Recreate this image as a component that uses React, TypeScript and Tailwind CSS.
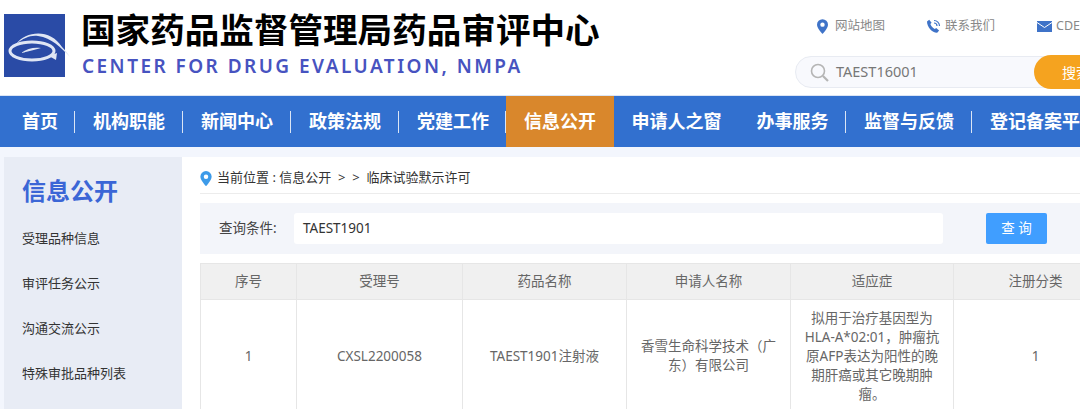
// App.tsx - 药审中心 信息公开页
import React from 'react'

const NAV = [
  { label: '首页', sep: true, cls: 'pl-[18px] pr-[17px]', sepCls: 'left-[17px]' },
  { label: '机构职能', sep: true, cls: 'px-[18px]', sepCls: 'left-[18px]' },
  { label: '新闻中心', sep: true, cls: 'px-[18px]', sepCls: 'left-[18px]' },
  { label: '政策法规', sep: true, cls: 'px-[18px]', sepCls: 'left-[18px]' },
  { label: '党建工作', sep: true, cls: 'pl-[18px] pr-[17px]', sepCls: 'left-[17px]' },
  { label: '信息公开', cls: 'px-[18px] bg-[#d9872c]' },
  { label: '申请人之窗', cls: 'px-[17.500px]' },
  { label: '办事服务', sep: true, cls: 'px-[17.500px]', sepCls: 'left-[17.500px]' },
  { label: '监督与反馈', sep: true, cls: 'px-[18px]', sepCls: 'left-[18px]' },
  { label: '登记备案平台', cls: 'px-[18px]' },
]

const SIDE = ['受理品种信息', '审评任务公示', '沟通交流公示', '特殊审批品种列表']

const HEADERS = ['序号', '受理号', '药品名称', '申请人名称', '适应症', '注册分类']

function Logo() {
  return (
    <svg width="66" height="64" viewBox="0 0 66 64" className="shrink-0 mt-px">
      <rect x="0" y="0" width="61" height="63" fill="#2a4ba6" />
      <path d="M12 30 C22 17 46 14 58 33 C62 37 65 41 66 43 C56 33 48 24 34 22 C26 21 20 24 12 30 Z" fill="#dfe6f4" />
      <ellipse cx="28" cy="37" rx="22" ry="9" fill="none" stroke="#dfe6f4" strokeWidth="3" />
      <path d="M17 39 C23 34 31 33 37 34 C31 36 25 37 17 39 Z" fill="#dfe6f4" />
      <path d="M45 42 L53 39 L52 46 Z" fill="#dfe6f4" />
    </svg>
  )
}

function Pin({ color, className }: { color: string; className?: string }) {
  return (
    <svg viewBox="0 0 12 16" className={className}>
      <path d="M6 0a6 6 0 0 0-6 6c0 4 6 10 6 10s6-6 6-10a6 6 0 0 0-6-6z" fill={color} />
      <circle cx="6" cy="6" r="2.400" fill="#fff" />
    </svg>
  )
}

function PhoneIcon() {
  return (
    <svg width="15" height="15" viewBox="0 0 15 15" className="shrink-0">
      <path d="M1 2.500 3.200.8l2.400 3-1.200 1.300c.6 1.900 2.200 3.800 4.400 4.900l1.400-1.100 2.900 2.600-1.900 2.200C6.600 14 .9 8.200 1 2.500z" fill="#3f73c8" />
      <path d="M8 1.500a5.500 5.500 0 0 1 5.500 5.500M8 4a3 3 0 0 1 3 3" fill="none" stroke="#3f73c8" strokeWidth="1.200" />
    </svg>
  )
}

function MailIcon() {
  return (
    <svg width="15" height="11" viewBox="0 0 15 11" className="shrink-0">
      <rect width="15" height="11" fill="#3f73c8" />
      <path d="M0 1.500 7.500 6.500 15 1.500" fill="none" stroke="#fff" strokeWidth="1" />
    </svg>
  )
}

function SearchIcon() {
  return (
    <svg width="19" height="19" viewBox="0 0 19 19" fill="none" stroke="#b5b5b5" className="shrink-0">
      <circle cx="8" cy="8" r="6.500" strokeWidth="1.600" />
      <path d="M13 13l5 5" strokeWidth="2.200" />
    </svg>
  )
}

export default function App() {
  return (
    <div className="w-[1080px] h-[409px] overflow-hidden bg-white font-['Noto_Sans','Noto_Sans_CJK_SC',sans-serif]">
      {/* 顶部 */}
      <div className="h-[95px] flex">
        <div className="w-[795px] flex pl-1 pt-[13px]">
          <Logo />
          <div className="ml-[11px] -mt-px">
            <div className="text-[34.600px] leading-[36px] font-bold text-black whitespace-nowrap">
              国家药品监督管理局药品审评中心
            </div>
            <div className="mt-[6px] ml-px text-[19px] leading-[24px] font-semibold tracking-[2.450px] text-[#4753c0] whitespace-nowrap">
              CENTER FOR DRUG EVALUATION, NMPA
            </div>
          </div>
        </div>
        <div className="flex-1 min-w-0">
          <div className="h-[56px] flex items-start pt-[17px] pl-[22px] text-[12.500px] text-[#888] whitespace-nowrap">
            <div className="flex items-center gap-[7px] w-[109px] shrink-0">
              <Pin color="#3f73c8" className="w-[11px] h-[15px] shrink-0" />
              <span>网站地图</span>
            </div>
            <div className="flex items-center gap-1 w-[111px] shrink-0">
              <PhoneIcon />
              <span>联系我们</span>
            </div>
            <div className="flex items-center gap-1 shrink-0">
              <MailIcon />
              <span>CDE邮箱</span>
            </div>
          </div>
          <div className="h-[32px] w-[300px] flex items-center rounded-l-full border border-[#e8ebf2] bg-[#f8f9fd] pl-[14px] relative">
            <SearchIcon />
            <span className="ml-[7px] -mt-px text-[14.500px] text-[#777]">TAEST16001</span>
            <div className="absolute left-[238px] top-[-2px] h-[34px] w-[80px] rounded-l-full bg-[#f5a31f] pl-[28px] text-sm leading-[36px] text-white whitespace-nowrap">
              搜索
            </div>
          </div>
        </div>
      </div>

      {/* 导航 */}
      <div className="h-[52px] flex bg-[#3270cf] pl-1 border-t border-[#dbe5f5] whitespace-nowrap">
        {NAV.map(n => (
          <div key={n.label} className={`flex items-center text-[18px] font-bold text-white ${n.cls}`}>
            {n.label}
            {n.sep && <span className={`w-px h-[22px] bg-[#dbe5f5] relative -ml-px ${n.sepCls}`} />}
          </div>
        ))}
      </div>

      {/* 主体 */}
      <div className="bg-[#f3f6fd] pt-[10px] pl-1 flex">
        <div className="w-[178px] h-[252px] shrink-0 bg-[#e8ecf5] pl-[18px] pt-[17px]">
          <div className="text-[24px] leading-[34px] font-bold text-[#3b66d6]">信息公开</div>
          <div className="mt-2">
            {SIDE.map(s => (
              <div key={s} className="h-[45px] flex items-center text-[13px] text-[#333] whitespace-nowrap">
                {s}
              </div>
            ))}
          </div>
        </div>

        <div className="flex-1 min-w-0 bg-white pl-[18px]">
          <div className="h-[37px] flex items-center border-b border-[#ececec] pt-[6px]">
            <Pin color="#3d9be9" className="w-3 h-[15px] shrink-0" />
            <span className="ml-[5px] text-[13px] text-[#333] whitespace-nowrap">
              当前位置 : 信息公开 &nbsp;&gt; &nbsp;&gt;&nbsp; 临床试验默示许可
            </span>
          </div>

          <div className="mt-[9px] h-[51px] flex items-center bg-[#f3f5fa] pl-[19px]">
            <span className="w-[75px] text-[13.500px] text-[#444]">查询条件:</span>
            <div className="w-[649px] h-[31px] flex items-center rounded-[3px] bg-white pl-[9px] text-[13.500px] text-[#333]">
              TAEST1901
            </div>
            <div className="ml-[43px] w-[61px] h-[31px] flex items-center justify-center rounded-[2px] bg-[#409eff] text-[13.500px] text-white">
              查 询
            </div>
          </div>

          <table className="mt-[9px] w-[917px] table-fixed border-collapse text-[13.500px] text-[#666] text-center">
            <colgroup>
              <col className="w-[96px]" />
              <col className="w-[166px]" />
              <col className="w-[164px]" />
              <col className="w-[164px]" />
              <col className="w-[163px]" />
              <col className="w-[164px]" />
            </colgroup>
            <thead>
              <tr className="h-[36px] bg-[#f0f0f0]">
                {HEADERS.map(h => (
                  <th key={h} className="border border-[#e6e6e6] font-normal">{h}</th>
                ))}
              </tr>
            </thead>
            <tbody>
              <tr className="leading-[19px]">
                <td className="border border-[#e6e6e6]">1</td>
                <td className="border border-[#e6e6e6]">CXSL2200058</td>
                <td className="border border-[#e6e6e6]">TAEST1901注射液</td>
                <td className="border border-[#e6e6e6] px-3">香雪生命科学技术（广东）有限公司</td>
                <td className="border border-[#e6e6e6] px-3 pt-[9px] pb-2">
                  拟用于治疗基因型为HLA-A*02:01，肿瘤抗原AFP表达为阳性的晚期肝癌或其它晚期肿瘤。
                </td>
                <td className="border border-[#e6e6e6]">1</td>
              </tr>
            </tbody>
          </table>
        </div>
      </div>
    </div>
  )
}
